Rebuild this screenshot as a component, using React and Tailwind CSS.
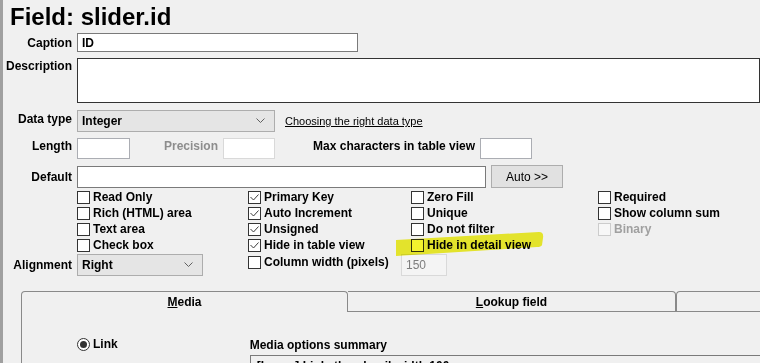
import React from "react";

const Box = ({ checked, disabled }) => (
  <span
    className={`w-[13px] h-[13px] border shrink-0 flex items-center justify-center ${
      disabled ? "border-[#cccccc] bg-[#f7f7f7]" : "border-[#333333] bg-white"
    }`}
  >
    {checked && (
      <svg width="11" height="11" viewBox="0 0 11 11">
        <path d="M1.5 5 L4.5 8 L9.5 2.5" fill="none" stroke="#3c3c3c" strokeWidth="1" />
      </svg>
    )}
  </span>
);

const Check = ({ label, checked, disabled }) => (
  <div className="flex items-center h-[16px] gap-[3px]">
    <Box checked={checked} disabled={disabled} />
    <span className={disabled ? "text-[#a0a0a0]" : "text-black"}>{label}</span>
  </div>
);

const Chevron = () => (
  <svg width="9" height="6" viewBox="0 0 9 6" className="shrink-0">
    <path d="M0.5 0.5 L4.5 4.5 L8.5 0.5" fill="none" stroke="#606060" strokeWidth="1" />
  </svg>
);

const Select = ({ value, width }) => (
  <div
    className={`${width} h-[22px] bg-[#e5e5e5] border border-[#adadad] flex items-center justify-between pl-[4px] pr-[9px]`}
  >
    <span>{value}</span>
    <Chevron />
  </div>
);

const Label = ({ children, className = "" }) => (
  <div className={`w-[69px] shrink-0 text-right ${className}`}>{children}</div>
);

const columns = [
  {
    width: "w-[171px]",
    items: [
      { label: "Read Only" },
      { label: "Rich (HTML) area" },
      { label: "Text area" },
      { label: "Check box" },
    ],
  },
  {
    width: "w-[163px]",
    items: [
      { label: "Primary Key", checked: true },
      { label: "Auto Increment", checked: true },
      { label: "Unsigned", checked: true },
      { label: "Hide in table view", checked: true },
    ],
  },
  {
    width: "w-[187px]",
    items: [
      { label: "Zero Fill" },
      { label: "Unique" },
      { label: "Do not filter" },
      { label: "Hide in detail view" },
    ],
  },
  {
    width: "w-[150px]",
    items: [
      { label: "Required" },
      { label: "Show column sum" },
      { label: "Binary", disabled: true },
    ],
  },
];

export default function App() {
  return (
    <div className="w-[760px] h-[363px] overflow-hidden relative bg-[#f0f0f0] border-l-[3px] border-[#a0a0a0] font-['Liberation_Sans',Arial,sans-serif] text-[12px] font-bold text-black leading-[14px]">
      {/* title */}
      <h1 className="mt-[3px] ml-[7px] h-[28px] text-[24px] leading-[28px] font-bold">
        Field: slider.id
      </h1>

      {/* caption */}
      <div className="mt-[2px] flex items-center">
        <Label>Caption</Label>
        <div className="ml-[5px] w-[281px] h-[19px] bg-white border border-[#7a7a7a] flex items-center pl-[4px]">
          ID
        </div>
      </div>

      {/* description */}
      <div className="mt-[6px] flex items-start">
        <Label className="pt-[1px]">Description</Label>
        <div className="ml-[5px] w-[700px] h-[45px] bg-white border border-[#333333]" />
      </div>

      {/* data type */}
      <div className="mt-[7px] flex items-center">
        <Label className="pb-[4px]">Data type</Label>
        <div className="ml-[5px]">
          <Select value="Integer" width="w-[198px]" />
        </div>
        <a className="ml-[10px] text-[11px] font-normal underline text-black">
          Choosing the right data type
        </a>
      </div>

      {/* length */}
      <div className="mt-[6px] flex items-center">
        <Label className="pb-[6px]">Length</Label>
        <div className="ml-[5px] w-[53px] h-[21px] bg-white border border-[#abadb3]" />
        <span className="ml-[34px] pb-[6px] text-[#8d8d8d]">Precision</span>
        <div className="ml-[5px] w-[52px] h-[21px] bg-white border border-[#d9d9d9]" />
        <span className="ml-[38px] pb-[6px]">Max characters in table view</span>
        <div className="ml-[5px] w-[52px] h-[21px] bg-white border border-[#abadb3]" />
      </div>

      {/* default */}
      <div className="mt-[6px] flex items-center">
        <Label>Default</Label>
        <div className="ml-[5px] w-[409px] h-[22px] bg-white border border-[#7a7a7a]" />
        <button className="ml-[5px] w-[72px] h-[23px] bg-[#e1e1e1] border border-[#adadad] font-normal">
          Auto &gt;&gt;
        </button>
      </div>

      {/* checkboxes */}
      <div className="mt-[1px] pl-[74px] flex">
        {columns.map((col, i) => (
          <div key={i} className={`${col.width} flex flex-col`}>
            {col.items.map((it) => (
              <Check key={it.label} {...it} />
            ))}
          </div>
        ))}
      </div>

      {/* alignment row */}
      <div className="mt-[1px] flex items-start">
        <div className="h-[22px] flex items-center">
          <Label>Alignment</Label>
        </div>
        <div className="ml-[5px]">
          <Select value="Right" width="w-[126px]" />
        </div>
        <div className="ml-[45px] w-[153px]">
          <Check label="Column width (pixels)" />
        </div>
        <div className="w-[46px] h-[22px] border border-[#d9d9d9] bg-[#f4f4f4] flex items-center pl-[4px] font-normal text-[#7d7d7d]">
          150
        </div>
      </div>

      {/* tabs */}
      <div className="mt-[15px] ml-[18px]">
        <div className="flex h-[21px]">
          <div className="w-[327px] shrink-0 border-t border-l border-r border-[#898989] rounded-t-[4px] flex items-center justify-center">
            <span>
              <span className="underline">M</span>edia
            </span>
          </div>
          <div className="w-[328px] shrink-0 border-t border-r border-b border-[#898989] rounded-tr-[4px] flex items-center justify-center">
            <span>
              <span className="underline">L</span>ookup field
            </span>
          </div>
          <div className="w-[200px] shrink-0 border-t border-l border-b border-[#898989] rounded-tl-[4px]" />
        </div>
        <div className="h-[60px] border-l border-[#898989] flex items-start">
          <div className="ml-[55px] mt-[25px] flex items-center gap-[3px]">
            <span className="w-[13px] h-[13px] rounded-full border border-[#333333] bg-white flex items-center justify-center">
              <span className="w-[7px] h-[7px] rounded-full bg-[#333333]" />
            </span>
            <span>Link</span>
          </div>
          <div className="ml-[132px] mt-[26px] flex flex-col">
            <span>Media options summary</span>
            <div className="mt-[3px] w-[520px] h-[30px] border border-[#7a7a7a] bg-[#f0f0f0] pl-[6px] pt-[3px]">
              [Image] Link, thumbnail width 100px
            </div>
          </div>
        </div>
      </div>

      {/* marker highlight */}
      <svg
        className="absolute left-[390px] top-[230px] mix-blend-multiply pointer-events-none"
        width="155"
        height="30"
        viewBox="0 0 155 30"
      >
        <path
          d="M3 10 L146 2 Q151 2 150 8 L149 15 Q148 17 144 17 L3 26 Z"
          fill="#f2f22e"
        />
      </svg>
    </div>
  );
}
